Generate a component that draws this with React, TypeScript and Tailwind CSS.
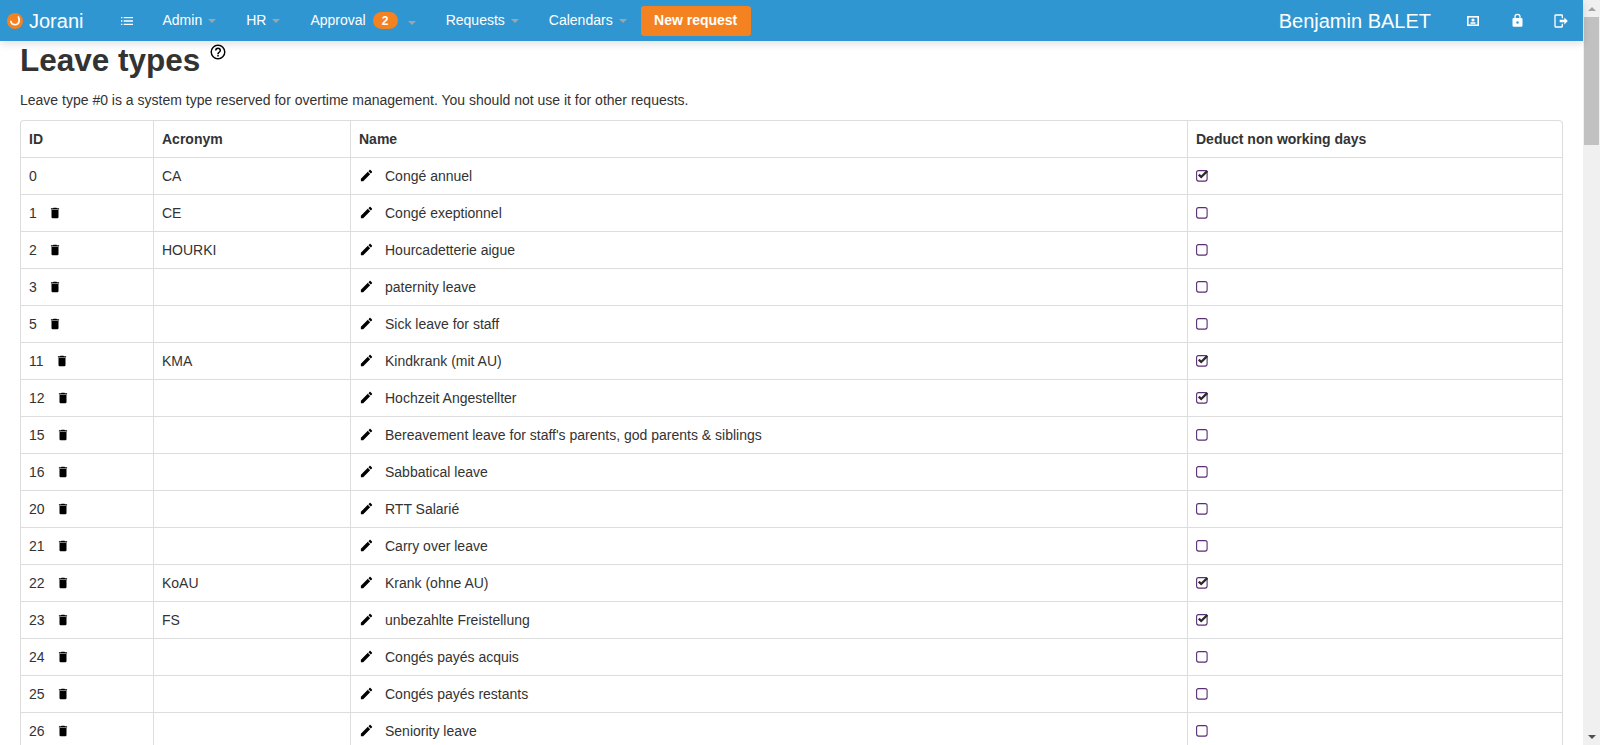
import React from "react";

const LEAVE_TYPES = [
  { id: 0, acronym: "CA", name: "Congé annuel", deduct: true },
  { id: 1, acronym: "CE", name: "Congé exeptionnel", deduct: false },
  { id: 2, acronym: "HOURKI", name: "Hourcadetterie aigue", deduct: false },
  { id: 3, acronym: "", name: "paternity leave", deduct: false },
  { id: 5, acronym: "", name: "Sick leave for staff", deduct: false },
  { id: 11, acronym: "KMA", name: "Kindkrank (mit AU)", deduct: true },
  { id: 12, acronym: "", name: "Hochzeit Angestellter", deduct: true },
  { id: 15, acronym: "", name: "Bereavement leave for staff's parents, god parents & siblings", deduct: false },
  { id: 16, acronym: "", name: "Sabbatical leave", deduct: false },
  { id: 20, acronym: "", name: "RTT Salarié", deduct: false },
  { id: 21, acronym: "", name: "Carry over leave", deduct: false },
  { id: 22, acronym: "KoAU", name: "Krank (ohne AU)", deduct: true },
  { id: 23, acronym: "FS", name: "unbezahlte Freistellung", deduct: true },
  { id: 24, acronym: "", name: "Congés payés acquis", deduct: false },
  { id: 25, acronym: "", name: "Congés payés restants", deduct: false },
  { id: 26, acronym: "", name: "Seniority leave", deduct: false },
];

function Icon({ d, className }: { d: string; className?: string }) {
  return (
    <svg viewBox="0 0 24 24" fill="currentColor" className={className}>
      <path d={d} />
    </svg>
  );
}

const PENCIL = "M20.71,7.04C21.1,6.65 21.1,6 20.71,5.63L18.37,3.29C18,2.9 17.35,2.9 16.96,3.29L15.12,5.12L18.87,8.87M3,17.25V21H6.75L17.81,9.93L14.06,6.18L3,17.25Z";
const TRASH = "M19,4H15.5L14.5,3H9.5L8.5,4H5V6H19M6,19A2,2 0 0,0 8,21H16A2,2 0 0,0 18,19V7H6V19Z";
const HELP = "M11,18H13V16H11V18M12,2A10,10 0 0,0 2,12A10,10 0 0,0 12,22A10,10 0 0,0 22,12A10,10 0 0,0 12,2M12,20C7.59,20 4,16.41 4,12C4,7.59 7.59,4 12,4C16.41,4 20,7.59 20,12C20,16.41 16.41,20 12,20M12,6A4,4 0 0,0 8,10H10A2,2 0 0,1 12,8A2,2 0 0,1 14,10C14,12 11,11.75 11,15H13C13,12.75 16,12.5 16,10A4,4 0 0,0 12,6Z";
const LOCK = "M12,17A2,2 0 0,0 14,15C14,13.89 13.1,13 12,13A2,2 0 0,0 10,15A2,2 0 0,0 12,17M18,8A2,2 0 0,1 20,10V20A2,2 0 0,1 18,22H6A2,2 0 0,1 4,20V10C4,8.89 4.9,8 6,8H7V6A5,5 0 0,1 12,1A5,5 0 0,1 17,6V8H18M12,3A3,3 0 0,0 9,6V8H15V6A3,3 0 0,0 12,3Z";
const EXIT = "M17,17.25V14H10V10H17V6.75L22.25,12L17,17.25M13,2A2,2 0 0,1 15,4V8H13V4H4V20H13V16H15V20A2,2 0 0,1 13,22H4A2,2 0 0,1 2,20V4A2,2 0 0,1 4,2H13Z";
const MENU = "M3,6H5V8H3V6M7,6H21V8H7V6M3,11H5V13H3V11M7,11H21V13H7V11M3,16H5V18H3V16M7,16H21V18H7V16Z";

function Caret() {
  return <span className="ml-[6px] inline-block h-0 w-0 border-x-4 border-t-4 border-x-transparent border-t-[#9ea4a8]" />;
}

function NavItem({ label, className }: { label: string; className?: string }) {
  return (
    <a className={`flex items-center text-[14px] text-white ${className ?? ""}`}>
      {label}
      <Caret />
    </a>
  );
}

function Checkbox({ checked }: { checked: boolean }) {
  return (
    <svg viewBox="0 0 13 13" className="block h-[13px] w-[13px] overflow-visible">
      <rect x="0.6" y="0.6" width="10.5" height="10.5" rx="2" fill="none" stroke="#5a2d74" strokeWidth="1.1" />
      {checked && <path d="M2.8 4.6L5.2 7L11.4 0.9" fill="none" stroke="#2b2b2b" strokeWidth="2.3" />}
    </svg>
  );
}

const cell = "border-t border-l border-[#dddddd] px-2 py-2 text-left align-top leading-5";

export default function App() {
  return (
    <div className="flex h-screen overflow-hidden bg-white font-['Liberation_Sans',Arial,sans-serif] text-[14px] text-[#333333]">
      <div className="flex min-w-0 flex-1 flex-col">
        {/* Navbar */}
        <nav className="relative z-10 flex h-[41px] shrink-0 items-center bg-[#3096d2] pl-[7px] shadow-[0_3px_8px_rgba(0,0,0,0.12)]">
          <svg viewBox="0 0 16 16" className="h-4 w-4 shrink-0">
            <circle cx="8" cy="8" r="8" fill="#f58220" />
            <path d="M3.8 7.8A4.2 4.2 0 0 0 12.1 8.4C12.3 6.6 12 5 11.2 3.4" fill="none" stroke="#ffffff" strokeWidth="1.7" />
          </svg>
          <span className="ml-[6px] text-[20px] text-white">Jorani</span>
          <Icon d={MENU} className="ml-[36px] h-4 w-4 text-white" />
          <NavItem label="Admin" className="ml-[27px]" />
          <NavItem label="HR" className="ml-[30px]" />
          <a className="ml-[30px] flex items-center text-[14px] text-white">
            Approval
            <span className="ml-[7px] flex h-[17px] w-[25px] items-center justify-center rounded-full bg-[#f58220] text-[12px] font-bold">2</span>
            <span className="ml-[4px]"><Caret /></span>
          </a>
          <NavItem label="Requests" className="ml-[30px]" />
          <NavItem label="Calendars" className="ml-[30px]" />
          <button className="ml-[14px] h-[30px] w-[110px] rounded-[3px] bg-[#f58220] text-[14px] font-bold text-white">New request</button>
          <span className="ml-auto text-[20px] text-white">Benjamin BALET</span>
          <svg viewBox="0 0 14 14" className="ml-[35px] h-[14px] w-[14px] text-white">
            <rect x="1.8" y="2.8" width="10.4" height="8.4" fill="none" stroke="currentColor" strokeWidth="1.6" />
            <circle cx="7" cy="6" r="1.6" fill="currentColor" />
            <rect x="4.5" y="8.2" width="5" height="1.6" fill="currentColor" />
          </svg>
          <Icon d={LOCK} className="ml-[29.5px] h-[15px] w-[15px] text-white" />
          <Icon d={EXIT} className="ml-[28.5px] mr-[14px] h-4 w-4 text-white" />
        </nav>

        {/* Content */}
        <main className="min-h-0 flex-1 overflow-hidden px-5">
          <div className="flex items-start">
            <h1 className="text-[31.5px] leading-[38px] font-bold">Leave types</h1>
            <Icon d={HELP} className="ml-[9px] mt-[2px] h-[18px] w-[18px] text-black" />
          </div>
          <p className="mt-[11px] leading-5">Leave type #0 is a system type reserved for overtime management. You should not use it for other requests.</p>
          <table className="mt-[10px] w-[1543px] table-fixed border-separate border-spacing-0 rounded-[4px] border-r border-b border-[#dddddd]">
            <colgroup>
              <col className="w-[133px]" />
              <col className="w-[197px]" />
              <col className="w-[837px]" />
              <col />
            </colgroup>
            <thead>
              <tr>
                <th className={`${cell} rounded-tl-[4px] font-bold`}>ID</th>
                <th className={`${cell} font-bold`}>Acronym</th>
                <th className={`${cell} font-bold`}>Name</th>
                <th className={`${cell} rounded-tr-[4px] font-bold`}>Deduct non working days</th>
              </tr>
            </thead>
            <tbody>
              {LEAVE_TYPES.map((t) => (
                <tr key={t.id}>
                  <td className={cell}>
                    <span className="flex items-center">
                      {t.id}
                      {t.id !== 0 && <Icon d={TRASH} className="ml-[11.5px] h-[14px] w-[14px] text-black" />}
                    </span>
                  </td>
                  <td className={cell}>{t.acronym}</td>
                  <td className={cell}>
                    <span className="flex items-center">
                      <Icon d={PENCIL} className="mb-[2px] h-[15px] w-[15px] text-black" />
                      <span className="ml-[11px]">{t.name}</span>
                    </span>
                  </td>
                  <td className={cell}>
                    <span className="flex h-5 items-center">
                      <Checkbox checked={t.deduct} />
                    </span>
                  </td>
                </tr>
              ))}
            </tbody>
          </table>
        </main>
      </div>

      {/* Scrollbar */}
      <div className="flex w-[17px] shrink-0 flex-col bg-[#f0f0f0]">
        <div className="flex h-[17px] items-center justify-center">
          <span className="h-0 w-0 border-x-[4px] border-b-[4px] border-x-transparent border-b-[#a3a3a3]" />
        </div>
        <div className="mx-[1px] h-[128px] bg-[#c1c1c1]" />
        <div className="flex-1" />
        <div className="flex h-[17px] items-center justify-center">
          <span className="h-0 w-0 border-x-[4px] border-t-[4px] border-x-transparent border-t-[#505050]" />
        </div>
      </div>
    </div>
  );
}
